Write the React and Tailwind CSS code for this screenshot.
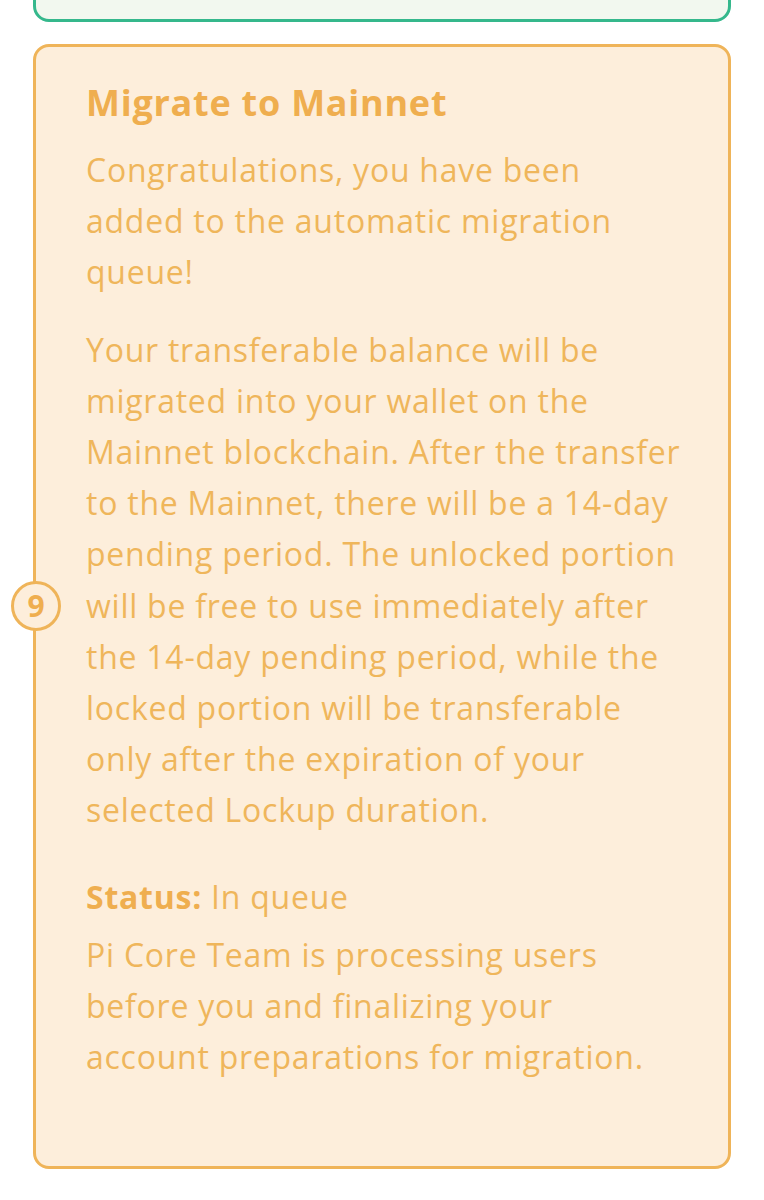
export default function App() {
  const p1 = ["Congratulations, you have been", "added to the automatic migration", "queue!"];
  const p2 = [
    "Your transferable balance will be",
    "migrated into your wallet on the",
    "Mainnet blockchain. After the transfer",
    "to the Mainnet, there will be a 14-day",
    "pending period. The unlocked portion",
    "will be free to use immediately after",
    "the 14-day pending period, while the",
    "locked portion will be transferable",
    "only after the expiration of your",
    "selected Lockup duration.",
  ];
  const p3 = ["Pi Core Team is processing users", "before you and finalizing your", "account preparations for migration."];
  const font = { fontFamily: "'Open Sans', Lato, sans-serif" };
  return (
    <div className="w-[764px] h-[1200px] bg-white overflow-hidden px-[33px] [font-variant-ligatures:none]" style={font}>
      <div className="-mt-[20px] h-[42px] border-[3px] border-[#35b88c] bg-[#f2f8ef] rounded-[16px]" />
      <div className="relative mt-[22px] border-[3px] border-[#efb459] bg-[#fdeedb] rounded-[16px] pl-[50px] pt-[34px] pb-[84px] tracking-[0.75px]">
        <div className="absolute left-[-25px] top-[534px] w-[50px] h-[50px] rounded-full border-[3px] border-[#efb459] bg-[#fdeedb] flex items-center justify-center text-[30px] font-bold text-[#efae4f] leading-none tracking-normal">
          9
        </div>
        <h2 className="text-[36px] leading-[43px] font-bold text-[#efae4f]">Migrate to Mainnet</h2>
        <p className="mt-[20px] text-[32px] leading-[51.2px] text-[#efb65b]">
          {p1.map((l) => (
            <span key={l} className="block whitespace-nowrap">{l}</span>
          ))}
        </p>
        <p className="mt-[26px] text-[32px] leading-[51.2px] text-[#efb65b]">
          {p2.map((l) => (
            <span key={l} className="block whitespace-nowrap">{l}</span>
          ))}
        </p>
        <p className="mt-[35px] text-[32px] leading-[51.2px] text-[#efb65b]">
          <span className="font-bold text-[#efae4f]">Status:</span> In queue
        </p>
        <p className="mt-[7px] text-[32px] leading-[51.2px] text-[#efb65b]">
          {p3.map((l) => (
            <span key={l} className="block whitespace-nowrap">{l}</span>
          ))}
        </p>
      </div>
    </div>
  );
}
